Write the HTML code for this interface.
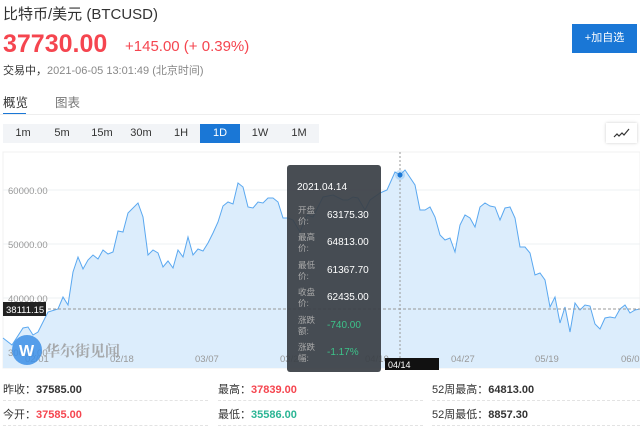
<!DOCTYPE html>
<html><head><meta charset="utf-8"><style>
*{margin:0;padding:0;box-sizing:border-box}
body{width:640px;height:428px;overflow:hidden;background:#fff;font-family:"Liberation Sans","Noto Sans CJK SC",sans-serif;position:relative;color:#333}
.a{position:absolute;white-space:nowrap}
.tb{position:absolute;top:124px;height:19px;width:40px;background:#f2f4f7;font-size:11px;line-height:19px;text-align:center;color:#333}
.st{font-size:11px;color:#333}
.st b{font-weight:bold}
.dl{position:absolute;height:0;border-top:1px dashed #e3e3e3}
</style></head><body>
<div class="a" style="left:3px;top:3px;font-size:15px;color:#333">比特币/美元 (BTCUSD)</div>
<div class="a" style="left:3px;top:30px;font-size:25px;font-weight:bold;color:#f5454f">37730.00</div>
<div class="a" style="left:125px;top:38px;font-size:15px;color:#f5454f">+145.00 (+ 0.39%)</div>
<div class="a" style="left:3px;top:62px;font-size:11px;color:#888"><span style="color:#333">交易中，</span>2021-06-05 13:01:49 (北京时间)</div>
<div class="a" style="left:572px;top:24px;width:65px;height:29px;background:#1a77d6;color:#fff;font-size:11px;line-height:29px;text-align:center">+加自选</div>
<div class="a" style="left:3px;top:92px;font-size:12.5px;color:#333">概览</div>
<div class="a" style="left:55px;top:92px;font-size:12.5px;color:#777">图表</div>
<div class="a" style="left:3px;top:113px;width:23px;height:2px;background:#1a77d6"></div>
<div class="a" style="left:0;top:114px;width:640px;height:1px;background:#eee"></div>
<div class="tb" style="left:3px">1m</div><div class="tb" style="left:42px">5m</div><div class="tb" style="left:82px">15m</div><div class="tb" style="left:121px">30m</div><div class="tb" style="left:161px">1H</div><div class="tb" style="left:200px;background:#1a77d6;color:#fff">1D</div><div class="tb" style="left:240px">1W</div><div class="tb" style="left:279px">1M</div>
<div class="a" style="left:606px;top:123px;width:31px;height:20px;background:#fff;box-shadow:0 0 3px #ccc"><svg width="31" height="20"><path d="M8 14l3-3 2 2 3-3 2 2 5-6" fill="none" stroke="#333" stroke-width="1.2"/></svg></div>
<svg class="a" style="left:0;top:0" width="640" height="428">
<rect x="3" y="152" width="637" height="216" fill="#fff" stroke="#f0f0f0"/>
<g stroke="#eef0f3"><line x1="3" y1="190" x2="640" y2="190"/><line x1="3" y1="244" x2="640" y2="244"/><line x1="3" y1="298" x2="640" y2="298"/></g>
<path d="M3 338L12 345L23 328L28 327L33 335L38 332L48 312L58 309L63 297L68 305L73 272L78 257L83 269L88 260L93 255L98 259L103 250L108 254L113 252L118 231L123 232L128 213L138 203L143 217L148 255L153 250L158 253L163 267L168 261L173 268L178 250L183 257L188 237L193 255L198 249L203 251L208 243L213 233L218 222L223 206L228 202L233 204L238 183L243 187L248 207L253 208L258 202L263 203L268 198L273 198L278 202L283 218L288 218L293 220L300 232L307 215L313 217L323 197L333 195L343 200L348 200L353 197L358 198L365 210L370 200L380 193L387 190L395 172L400 175L405 170L415 185L420 210L425 210L430 207L435 217L440 235L445 240L450 238L455 252L460 225L465 215L470 218L475 227L480 207L485 203L490 206L495 207L500 220L505 208L510 207L515 218L520 247L525 247L530 253L535 275L540 273L545 280L550 307L555 297L560 323L565 307L570 332L575 303L580 310L585 305L590 306L595 324L600 329L605 318L610 317L615 318L620 309L625 305L630 313L635 310L640 309L640 368L3 368Z" fill="#dcedfc" stroke="none"/>
<path d="M3 338L12 345L23 328L28 327L33 335L38 332L48 312L58 309L63 297L68 305L73 272L78 257L83 269L88 260L93 255L98 259L103 250L108 254L113 252L118 231L123 232L128 213L138 203L143 217L148 255L153 250L158 253L163 267L168 261L173 268L178 250L183 257L188 237L193 255L198 249L203 251L208 243L213 233L218 222L223 206L228 202L233 204L238 183L243 187L248 207L253 208L258 202L263 203L268 198L273 198L278 202L283 218L288 218L293 220L300 232L307 215L313 217L323 197L333 195L343 200L348 200L353 197L358 198L365 210L370 200L380 193L387 190L395 172L400 175L405 170L415 185L420 210L425 210L430 207L435 217L440 235L445 240L450 238L455 252L460 225L465 215L470 218L475 227L480 207L485 203L490 206L495 207L500 220L505 208L510 207L515 218L520 247L525 247L530 253L535 275L540 273L545 280L550 307L555 297L560 323L565 307L570 332L575 303L580 310L585 305L590 306L595 324L600 329L605 318L610 317L615 318L620 309L625 305L630 313L635 310L640 309" fill="none" stroke="#5aa8f0" stroke-width="1"/>
<g font-size="9.5" fill="#999" font-family="Liberation Sans,sans-serif"><text x="8" y="194">60000.00</text><text x="8" y="248">50000.00</text><text x="8" y="302">40000.00</text><text x="8" y="356">30000.00</text>
<text x="25" y="362">02/01</text><text x="110" y="362">02/18</text><text x="195" y="362">03/07</text><text x="280" y="362">03/24</text><text x="365" y="362">04/10</text><text x="451" y="362">04/27</text><text x="535" y="362">05/19</text><text x="621" y="362">06/0</text></g>
<line x1="3" y1="309" x2="640" y2="309" stroke="#999" stroke-dasharray="3,2"/>
<line x1="400" y1="152" x2="400" y2="368" stroke="#999" stroke-dasharray="2,2"/>
<circle cx="400" cy="175" r="5" fill="#5aa8f0" opacity=".3"/><circle cx="400" cy="175" r="2.5" fill="#1a77d6"/>
<circle cx="27" cy="350" r="15" fill="#3d8fe6" opacity=".85"/><text x="19" y="356" font-size="16" font-weight="bold" fill="#fff">W</text>
<text x="45" y="356" font-size="15" font-family="Noto Serif CJK SC,serif" font-weight="bold" fill="#999" opacity=".8">华尔街见闻</text>
<rect x="3" y="302" width="43" height="14" fill="#222"/><text x="6" y="313" font-size="9.5" fill="#fff">38111.15</text>
<rect x="287" y="165" width="94" height="207" rx="3" fill="#3a3f46" opacity=".93"/>
<rect x="385" y="358" width="54" height="12" fill="#111"/><text x="388" y="368" font-size="9" fill="#fff">04/14</text>
<g font-size="10" fill="#fff"><text x="297" y="190">2021.04.14</text>
<text x="327" y="218">63175.30</text><text x="327" y="245">64813.00</text><text x="327" y="273">61367.70</text><text x="327" y="300">62435.00</text>
<text x="327" y="328" fill="#3cc38a">-740.00</text><text x="327" y="355" fill="#3cc38a">-1.17%</text></g>
<g font-size="8.5" fill="#aaa"><text x="298" y="213">开盘</text><text x="298" y="224">价:</text><text x="298" y="240">最高</text><text x="298" y="251">价:</text><text x="298" y="268">最低</text><text x="298" y="279">价:</text><text x="298" y="295">收盘</text><text x="298" y="306">价:</text><text x="298" y="323">涨跌</text><text x="298" y="334">额:</text><text x="298" y="350">涨跌</text><text x="298" y="361">幅:</text></g>
</svg>
<div class="a st" style="left:3px;top:381px">昨收：<b>37585.00</b></div>
<div class="a st" style="left:3px;top:406px">今开：<b style="color:#f5454f">37585.00</b></div>
<div class="a st" style="left:218px;top:381px">最高：<b style="color:#f5454f">37839.00</b></div>
<div class="a st" style="left:218px;top:406px">最低：<b style="color:#2bb594">35586.00</b></div>
<div class="a st" style="left:432px;top:381px">52周最高：<b>64813.00</b></div>
<div class="a st" style="left:432px;top:406px">52周最低：<b>8857.30</b></div>
<div class="dl" style="left:3px;top:400px;width:205px"></div><div class="dl" style="left:3px;top:425px;width:205px"></div>
<div class="dl" style="left:218px;top:400px;width:205px"></div><div class="dl" style="left:218px;top:425px;width:205px"></div>
<div class="dl" style="left:432px;top:400px;width:208px"></div><div class="dl" style="left:432px;top:425px;width:208px"></div>
</body></html>
